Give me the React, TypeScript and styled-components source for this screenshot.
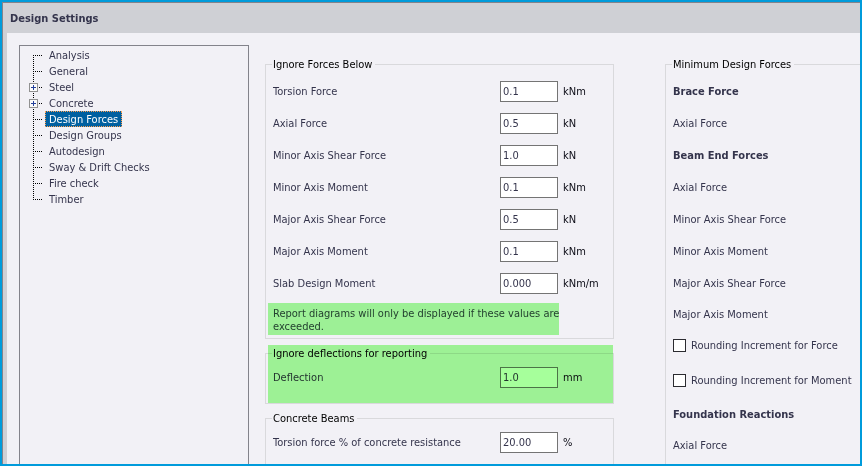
import React, { useId, useState } from 'react';
import styled, { createGlobalStyle } from 'styled-components';

const colors = {
  frame: '#009bdb',
  edge: '#83838b',
  header: '#cfd0d5',
  panel: '#f2f1f6',
  line: '#d9d9dc',
  ink: '#34344c',
  highlight: '#9df096',
};

const GlobalStyle = createGlobalStyle`
  * { box-sizing: border-box; }
  body { margin: 0; background: ${colors.panel}; }
  body, button, input {
    font-family: 'DejaVu Sans Condensed', 'DejaVu Sans', Tahoma, sans-serif;
    font-size: 11px;
    color: ${colors.ink};
  }
`;

const Frame = styled.div`
  height: 100vh;
  border: 2px solid ${colors.frame};
  overflow: hidden;
`;

const Dialog = styled.div`
  height: 100%;
  display: flex;
  flex-direction: column;
  border-top: 1px solid ${colors.edge};
  border-left: 1px solid ${colors.edge};
  background: ${colors.header};
`;

const TitleBar = styled.header`
  flex: none;
  height: 30px;
  padding-left: 7px;
`;

const Title = styled.h1`
  margin: 0;
  font-size: 11px;
  line-height: 31px;
  font-weight: bold;
  color: ${colors.ink};
`;

const Body = styled.main`
  flex: 1;
  min-height: 0;
  margin-left: 4px;
  padding-left: 12px;
  display: grid;
  grid-template-columns: 230px minmax(0, 365fr) minmax(0, 246fr);
  background: ${colors.panel};
  overflow: hidden;
`;

const Tree = styled.ul`
  margin: 12px 0 0;
  padding: 1px 0 0 9px;
  list-style: none;
  border: 1px solid ${colors.edge};
  border-bottom: 0;
`;

const TreeRow = styled.li`
  display: flex;
  height: 16px;
`;

const TreeButton = styled.button<{ $selected?: boolean }>`
  height: 16px;
  padding: 1px 3px 0;
  border: 1px dotted ${p => (p.$selected ? '#ff9f50' : 'transparent')};
  background: ${p => (p.$selected ? '#0060a0' : 'transparent')};
  color: ${p => (p.$selected ? '#ffffff' : colors.ink)};
  line-height: 14px;
  white-space: nowrap;
`;

const Column = styled.div`
  display: flex;
  flex-direction: column;
  gap: 7px;
  min-width: 0;
  margin: 24px 0 0 16px;
`;

const OffsetColumn = styled(Column)`
  margin-left: 51px;
  margin-right: -8px;
`;

const Group = styled.fieldset<{ $top?: number; $bottom?: number; $marked?: boolean }>`
  position: relative;
  min-width: 0;
  margin: 0;
  padding: ${p => p.$top ?? 0}px 6px ${p => p.$bottom ?? 0}px;
  border: 1px solid ${colors.line};

  &::after {
    content: '';
    display: ${p => (p.$marked ? 'block' : 'none')};
    position: absolute;
    inset: -16px 0 0 2px;
    background: #a6ff9b;
    mix-blend-mode: multiply;
    pointer-events: none;
  }
`;

const Legend = styled.legend`
  padding: 0 3px 0 1px;
  line-height: 15px;
  color: #000000;
`;

const Row = styled.div<{ $height?: number }>`
  display: flex;
  align-items: center;
  height: ${p => p.$height ?? 32}px;
  padding-left: 1px;
  white-space: nowrap;
`;

const FieldLabel = styled.label`
  flex: 1;
`;

const NumberBox = styled.input`
  width: 58px;
  height: 21px;
  padding: 0 2px;
  border: 1px solid #747474;
  border-radius: 0;
  background: #ffffff;
`;

const Unit = styled.span`
  width: 44px;
  margin-left: 5px;
  color: #0a0a14;
`;

const Note = styled.p`
  width: fit-content;
  height: 32px;
  margin: 4px 0 0 -4px;
  padding: 4px 0 0 5px;
  line-height: 13px;
  white-space: nowrap;
  background: ${colors.highlight};
  color: #23402f;
`;

const SubHeading = styled.h2`
  margin: 0;
  font-size: 11px;
  font-weight: bold;
`;

const CheckLabel = styled.label`
  display: flex;
  align-items: center;
  gap: 5px;
`;

const CheckBox = styled.input`
  appearance: none;
  width: 13px;
  height: 13px;
  margin: 0;
  border: 1px solid #2b2b30;
  background: #ffffff;

  &:checked {
    box-shadow: inset 0 0 0 2px #ffffff;
    background: #0060a0;
  }
`;

type Position = 'first' | 'middle' | 'last';

function Branch({ position, expandable }: { position: Position; expandable?: boolean }) {
  return (
    <svg width="16" height="16" viewBox="0 0 16 16" shapeRendering="crispEdges" aria-hidden="true">
      <g stroke="#000000" strokeDasharray="1 1" fill="none">
        {position !== 'first' && <path d="M4.5 0V8" />}
        {position !== 'last' && <path d="M4.5 8V16" />}
        <path d="M4 8.5H13" />
      </g>
      {expandable && (
        <>
          <rect x="0.5" y="4.5" width="8" height="8" fill="#fbfbfb" stroke="#919191" />
          <path d="M2 8.5H7M4.5 6V11" stroke="#24409a" fill="none" />
        </>
      )}
    </svg>
  );
}

const sections = [
  { name: 'Analysis' },
  { name: 'General' },
  { name: 'Steel', expandable: true },
  { name: 'Concrete', expandable: true },
  { name: 'Design Forces' },
  { name: 'Design Groups' },
  { name: 'Autodesign' },
  { name: 'Sway & Drift Checks' },
  { name: 'Fire check' },
  { name: 'Timber' },
];

const ignoredForces = [
  ['Torsion Force', '0.1', 'kNm'],
  ['Axial Force', '0.5', 'kN'],
  ['Minor Axis Shear Force', '1.0', 'kN'],
  ['Minor Axis Moment', '0.1', 'kNm'],
  ['Major Axis Shear Force', '0.5', 'kN'],
  ['Major Axis Moment', '0.1', 'kNm'],
  ['Slab Design Moment', '0.000', 'kNm/m'],
];

function Field({ label, value, unit }: { label: string; value: string; unit: string }) {
  const id = useId();
  return (
    <Row>
      <FieldLabel htmlFor={id}>{label}</FieldLabel>
      <NumberBox id={id} type="text" defaultValue={value} />
      <Unit>{unit}</Unit>
    </Row>
  );
}

function Check({ label }: { label: string }) {
  return (
    <CheckLabel>
      <CheckBox type="checkbox" />
      {label}
    </CheckLabel>
  );
}

export default function App() {
  const [selected, setSelected] = useState('Design Forces');
  const last = sections.length - 1;

  return (
    <>
      <GlobalStyle />
      <Frame>
        <Dialog>
          <TitleBar>
            <Title>Design Settings</Title>
          </TitleBar>
          <Body>
            <Tree>
              {sections.map((s, i) => (
                <TreeRow key={s.name}>
                  <Branch
                    position={i === 0 ? 'first' : i === last ? 'last' : 'middle'}
                    expandable={s.expandable}
                  />
                  <TreeButton $selected={s.name === selected} onClick={() => setSelected(s.name)}>
                    {s.name}
                  </TreeButton>
                </TreeRow>
              ))}
            </Tree>

            <Column>
              <Group $top={3} $bottom={3}>
                <Legend>Ignore Forces Below</Legend>
                {ignoredForces.map(([label, value, unit]) => (
                  <Field key={label} label={label} value={value} unit={unit} />
                ))}
                <Note>
                  Report diagrams will only be displayed if these values are
                  <br />
                  exceeded.
                </Note>
              </Group>
              <Group $bottom={10} $marked>
                <Legend>Ignore deflections for reporting</Legend>
                <Field label="Deflection" value="1.0" unit="mm" />
              </Group>
              <Group $bottom={10}>
                <Legend>Concrete Beams</Legend>
                <Field label="Torsion force % of concrete resistance" value="20.00" unit="%" />
              </Group>
            </Column>

            <OffsetColumn>
              <Group $top={3} $bottom={10}>
                <Legend>Minimum Design Forces</Legend>
                <Row><SubHeading>Brace Force</SubHeading></Row>
                <Row>Axial Force</Row>
                <Row><SubHeading>Beam End Forces</SubHeading></Row>
                <Row>Axial Force</Row>
                <Row>Minor Axis Shear Force</Row>
                <Row>Minor Axis Moment</Row>
                <Row>Major Axis Shear Force</Row>
                <Row $height={31}>Major Axis Moment</Row>
                <Row $height={31}><Check label="Rounding Increment for Force" /></Row>
                <Row $height={38}><Check label="Rounding Increment for Moment" /></Row>
                <Row $height={31}><SubHeading>Foundation Reactions</SubHeading></Row>
                <Row $height={31}>Axial Force</Row>
              </Group>
            </OffsetColumn>
          </Body>
        </Dialog>
      </Frame>
    </>
  );
}
